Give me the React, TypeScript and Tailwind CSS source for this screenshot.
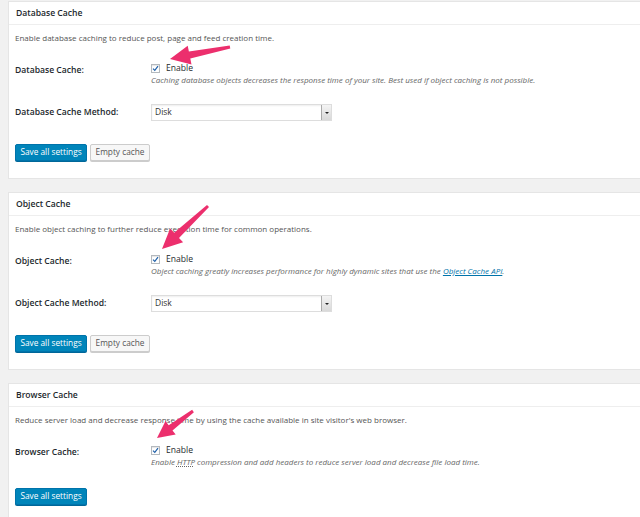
import React from 'react'

const font = { fontFamily: '"Open Sans", "Liberation Sans", sans-serif' }

type Pt = [number, number]

function arrowPoints(tail: Pt, tip: Pt, headLen: number, headHalf: number, tailW: number, neckW: number) {
  const dx = tip[0] - tail[0]
  const dy = tip[1] - tail[1]
  const len = Math.hypot(dx, dy)
  const ux = dx / len
  const uy = dy / len
  const nx = -uy
  const ny = ux
  const bx = tip[0] - ux * headLen
  const by = tip[1] - uy * headLen
  const pts: Pt[] = [
    [tail[0] + nx * tailW, tail[1] + ny * tailW],
    [bx + nx * neckW, by + ny * neckW],
    [bx + nx * headHalf, by + ny * headHalf],
    tip,
    [bx - nx * headHalf, by - ny * headHalf],
    [bx - nx * neckW, by - ny * neckW],
    [tail[0] - nx * tailW, tail[1] - ny * tailW],
  ]
  return pts.map((p) => p.map((v) => v.toFixed(1)).join(',')).join(' ')
}

function Checkbox() {
  return (
    <span className="inline-flex h-[9px] w-[9px] items-center justify-center border border-[#b4b9be] bg-white shadow-[inset_0_1px_1px_rgba(0,0,0,0.1)]">
      <svg width="7" height="7" viewBox="0 0 7 7">
        <path d="M1 3.6 L2.8 5.4 L6 1.2" fill="none" stroke="#1e5fa8" strokeWidth="1.2" />
      </svg>
    </span>
  )
}

function Select() {
  return (
    <div className="flex h-[17px] w-[181px] items-center border border-[#ddd] bg-white pl-[3px] shadow-[inset_0_1px_2px_rgba(0,0,0,0.07)]">
      <span className="flex-1 text-[8.5px] text-[#333]">Disk</span>
      <span className="flex h-[15px] w-[10px] items-center justify-center border-l border-[#aaa] bg-gradient-to-b from-[#f4f4f4] to-[#d9d9d9]">
        <span className="h-0 w-0 border-x-[2px] border-t-[2px] border-x-transparent border-t-[#222]" />
      </span>
    </div>
  )
}

function SaveButton() {
  return (
    <button className="h-[17px] w-[72px] rounded-[2px] border border-[#0073aa] bg-[#0085ba] text-[8.3px] text-white shadow-[0_1px_0_#006799]">
      Save all settings
    </button>
  )
}

function EmptyButton() {
  return (
    <button className="h-[17px] w-[60px] rounded-[2px] border border-[#ccc] bg-[#f7f7f7] text-[8.3px] text-[#555] shadow-[0_1px_0_#ccc]">
      Empty cache
    </button>
  )
}

function Panel({
  title,
  desc,
  label,
  note,
  methodLabel,
  emptyButton,
}: {
  title: string
  desc: string
  label: string
  note: React.ReactNode
  methodLabel?: string
  emptyButton?: boolean
}) {
  return (
    <section className="-mr-4 border border-[#e5e5e5] bg-white">
      <div className="flex h-[23px] items-center border-b border-[#eee] pl-[7px] text-[8.6px] font-semibold text-[#23282d]">
        {title}
      </div>
      <div className="pb-[17px] pl-[6px]">
        <p className="pt-[7px] text-[8px] leading-[12px] text-[#555]">{desc}</p>
        <div className="mt-[18px] flex">
          <div className="w-[136px] pt-[2px] text-[8.6px] font-semibold leading-[12px] text-[#23282d]">{label}</div>
          <div>
            <div className="flex h-[12px] items-center gap-[6px] text-[8.6px] text-[#23282d]">
              <Checkbox />
              <span>Enable</span>
            </div>
            <div className="text-[8px] italic leading-[12px] text-[#666]">{note}</div>
          </div>
        </div>
        {methodLabel && (
          <div className="mt-[18px] flex items-center">
            <div className="w-[136px] text-[8.6px] font-semibold text-[#23282d]">{methodLabel}</div>
            <Select />
          </div>
        )}
        <div className={`flex gap-[3px] ${methodLabel ? 'mt-[23px]' : 'mt-[20px]'}`}>
          <SaveButton />
          {emptyButton && <EmptyButton />}
        </div>
      </div>
    </section>
  )
}

export default function App() {
  return (
    <div className="relative h-[517px] w-[640px] overflow-hidden bg-[#f1f1f1] pl-[8px] pt-[1px]" style={font}>
      <div className="flex flex-col gap-[13px]">
        <Panel
          title="Database Cache"
          desc="Enable database caching to reduce post, page and feed creation time."
          label="Database Cache:"
          note="Caching database objects decreases the response time of your site. Best used if object caching is not possible."
          methodLabel="Database Cache Method:"
          emptyButton
        />
        <Panel
          title="Object Cache"
          desc="Enable object caching to further reduce execution time for common operations."
          label="Object Cache:"
          note={
            <>
              Object caching greatly increases performance for highly dynamic sites that use the{' '}
              <a className="text-[#0073aa] underline">Object Cache API</a>.
            </>
          }
          methodLabel="Object Cache Method:"
          emptyButton
        />
        <Panel
          title="Browser Cache"
          desc="Reduce server load and decrease response time by using the cache available in site visitor's web browser."
          label="Browser Cache:"
          note={
            <>
              Enable <abbr className="underline decoration-dotted">HTTP</abbr> compression and add headers to reduce server
              load and decrease file load time.
            </>
          }
        />
      </div>
      <svg className="pointer-events-none absolute left-0 top-0" width="640" height="517">
        <polygon points={arrowPoints([230, 47], [170, 59], 20, 9.5, 1.5, 3.5)} fill="#ec2f6d" />
        <polygon points={arrowPoints([208, 206], [162, 249], 20, 9.5, 1.5, 3.5)} fill="#ec2f6d" />
        <polygon points={arrowPoints([193, 411], [157, 438], 17, 8.5, 1.5, 3.2)} fill="#ec2f6d" />
      </svg>
    </div>
  )
}
